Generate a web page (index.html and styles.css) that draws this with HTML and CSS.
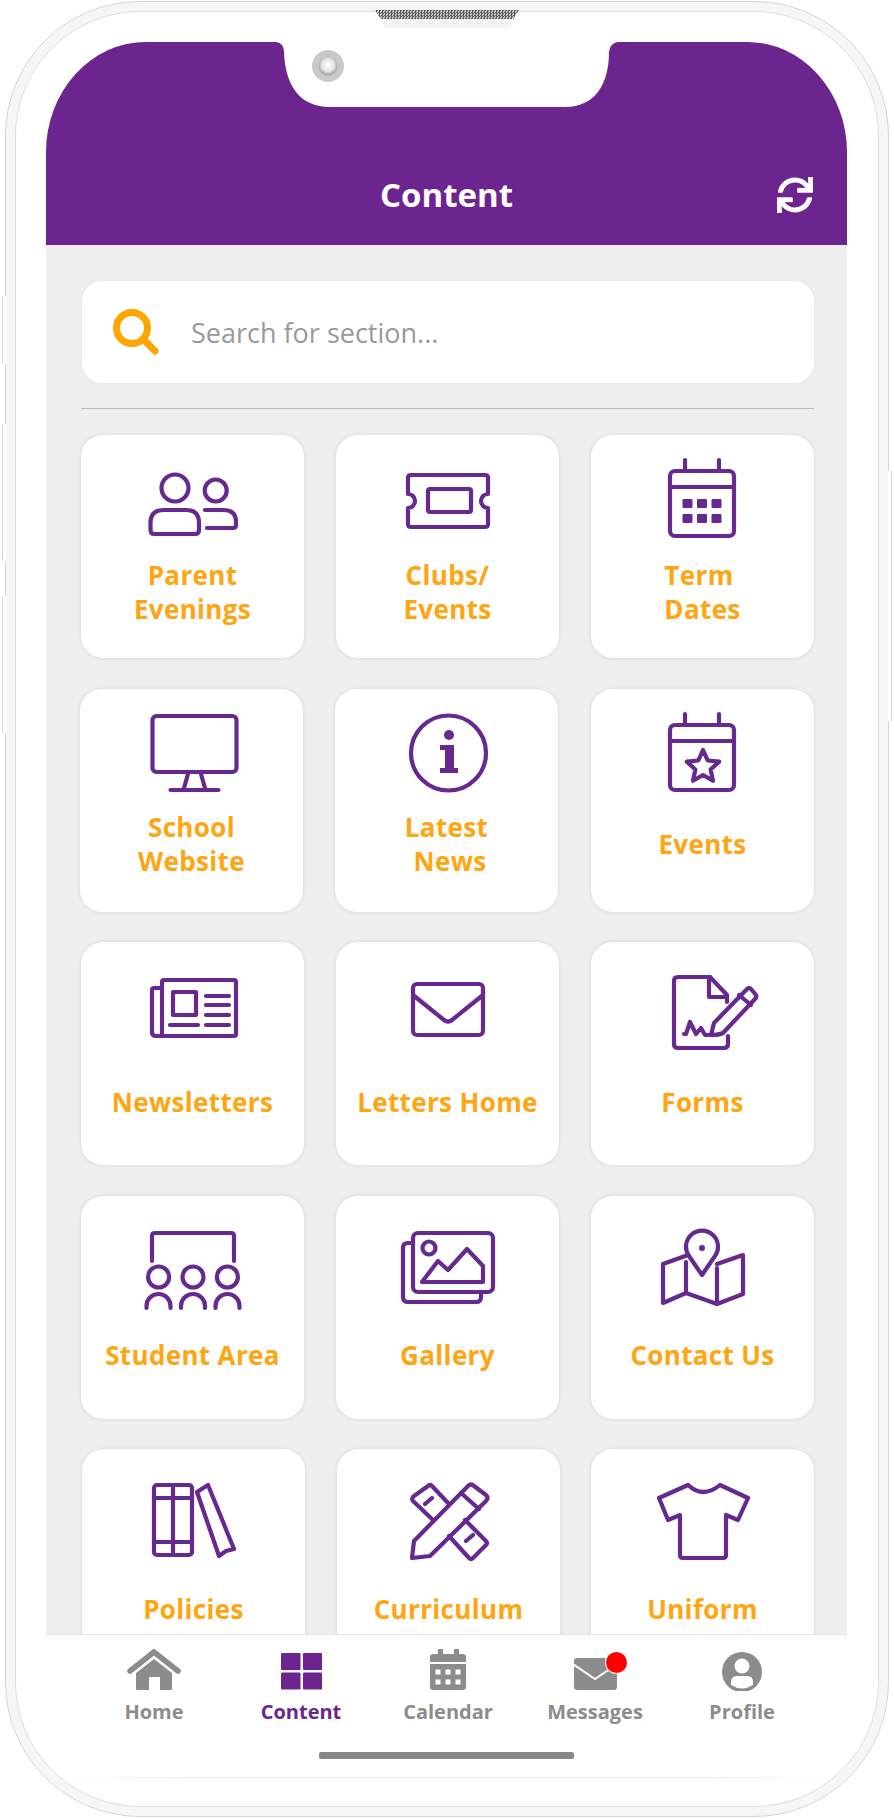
FILE: index.html
```html
<!DOCTYPE html>
<html lang="en">
<head>
    <meta charset="UTF-8">
    <meta name="viewport" content="width=device-width, initial-scale=1.0">
    <title>Content</title>
    <link rel="stylesheet" href="styles.css">
</head>
<body>
    <div class="phone">
        <span class="side-btn btn-mute"></span>
        <span class="side-btn btn-up"></span>
        <span class="side-btn btn-down"></span>
        <span class="side-btn btn-power"></span>
        <div class="speaker"></div>
        <div class="speaker-mesh"></div>
        <div class="bezel">
            <div class="screen">
                <header class="top-bar">
                    <!-- notch + camera -->
                    <svg class="notch" viewBox="0 0 355 66" width="355" height="66">
                        <defs>
                            <radialGradient id="lens" cx="50%" cy="45%" r="55%">
                                <stop offset="0" stop-color="#fff"/>
                                <stop offset="0.6" stop-color="#e4e4e4"/>
                                <stop offset="1" stop-color="#999"/>
                            </radialGradient>
                        </defs>
                        <path fill="#fff" d="M0 0L6 0Q14 1 14 10C15 38 26 65 60 65L295 65C328 65 339 38 339 10Q340 1 348 0L355 0Z"/>
                        <circle cx="58" cy="24" r="16" fill="#c9c9c9"/>
                        <circle cx="58" cy="24" r="9.5" fill="url(#lens)"/>
                    </svg>
                    <span class="top-spacer"></span>
                    <h1 class="top-title">Content</h1>
                    <svg class="refresh" viewBox="0 0 512 512" width="36" height="36">
                        <path fill="#fff" d="M440.65 12.57l4 82.77A247.16 247.16 0 0 0 255.83 8C134.73 8 33.91 94.92 12.29 209.82A12 12 0 0 0 24.09 224h49.05a12 12 0 0 0 11.67-9.26 175.91 175.91 0 0 1 317-56.94l-101.46-4.86a12 12 0 0 0-12.57 12v47.41a12 12 0 0 0 12 12H500a12 12 0 0 0 12-12V12a12 12 0 0 0-12-12h-47.37a12 12 0 0 0-11.98 12.57zM255.83 432a175.61 175.61 0 0 1-146-77.8l101.8 4.87a12 12 0 0 0 12.57-12v-47.4a12 12 0 0 0-12-12H12a12 12 0 0 0-12 12V500a12 12 0 0 0 12 12h47.35a12 12 0 0 0 12-12.6l-4.15-82.57A247.17 247.17 0 0 0 255.83 504c121.11 0 221.93-86.92 243.55-201.82a12 12 0 0 0-11.8-14.18h-49.05a12 12 0 0 0-11.67 9.26A175.86 175.86 0 0 1 255.83 432z"/>
                    </svg>
                </header>

                <main class="list">
                    <div class="search">
                        <svg class="search-icon" viewBox="0 0 48 48" width="48" height="48">
                            <circle cx="20" cy="20" r="15.5" fill="none" stroke="#ffa500" stroke-width="7"/>
                            <path d="M31 31L43 43" stroke="#ffa500" stroke-width="7" stroke-linecap="round"/>
                        </svg>
                        <span class="search-text">Search for section...</span>
                    </div>
                    <div class="divider"></div>

                    <div class="grid">
                        <div class="card row-1">
                            <svg class="icon" viewBox="0 0 100 90">
                                <circle cx="32" cy="31" r="13.5"/>
                                <circle cx="72.7" cy="33.5" r="11"/>
                                <path d="M21 53H43Q56 53 56 66V73Q56 77 52 77H11Q7.5 77 7.5 73V66Q7.5 53 21 53Z"/>
                                <path d="M62 53H80Q93 53 93 65V68Q93 71 90 71H64"/>
                            </svg>
                            <div class="label">Parent<br>Evenings</div>
                        </div>
                        <div class="card row-1">
                            <svg class="icon" viewBox="0 0 100 90">
                                <path d="M13 18H87Q90 18 90 21V37A7 7 0 0 0 90 51V67Q90 70 87 70H13Q10 70 10 67V51A7 7 0 0 0 10 37V21Q10 18 13 18Z"/>
                                <rect x="30" y="32" width="43" height="23" rx="2"/>
                            </svg>
                            <div class="label">Clubs/<br>Events</div>
                        </div>
                        <div class="card row-1">
                            <svg class="icon" viewBox="0 0 100 90">
                                <rect x="17" y="14" width="64" height="65" rx="5"/>
                                <path d="M17 30H81M32 3V14M66 3V14"/>
                                <g class="solid">
                                    <rect x="29.5" y="42" width="10" height="9" rx="1"/>
                                    <rect x="44" y="42" width="10" height="9" rx="1"/>
                                    <rect x="58.5" y="42" width="10" height="9" rx="1"/>
                                    <rect x="29.5" y="57" width="10" height="9" rx="1"/>
                                    <rect x="44" y="57" width="10" height="9" rx="1"/>
                                    <rect x="58.5" y="57" width="10" height="9" rx="1"/>
                                </g>
                            </svg>
                            <div class="label">Term&nbsp;<br>Dates</div>
                        </div>

                        <div class="card row-2 shift-left">
                            <svg class="icon" viewBox="0 0 100 90">
                                <rect x="10.5" y="5" width="84" height="56" rx="4"/>
                                <path d="M46.5 61L41.5 79M58.5 61L63.5 79M28.5 79H76.5"/>
                            </svg>
                            <div class="label">School<br>Website</div>
                        </div>
                        <div class="card row-2 shift-left">
                            <svg class="icon" viewBox="0 0 100 90">
                                <circle cx="51.5" cy="42" r="37.5"/>
                                <circle class="solid" cx="52" cy="24" r="5"/>
                                <path class="solid" d="M43 34H57V57H61V62H43V57H48V39H43Z"/>
                            </svg>
                            <div class="label">Latest<br>&nbsp;News</div>
                        </div>
                        <div class="card row-2">
                            <svg class="icon" viewBox="0 0 100 90">
                                <rect x="17" y="14" width="64" height="65" rx="5"/>
                                <path d="M17 30H81M32 3V14M66 3V14"/>
                                <polygon points="50,39 54.7,49.5 66.2,50.7 57.6,58.5 60,69.8 50,64 40,69.8 42.4,58.5 33.8,50.7 45.3,49.5"/>
                            </svg>
                            <div class="label">Events</div>
                        </div>

                        <div class="card row-3">
                            <svg class="icon" viewBox="0 0 100 90">
                                <rect x="19" y="16" width="74" height="56" rx="2"/>
                                <path d="M19 24H11Q9 24 9 26V68Q9 72 13 72H20"/>
                                <rect x="30" y="28" width="23" height="23"/>
                                <path d="M63 32H86M63 41H86M63 51H86M27 61H55M63 61H86"/>
                            </svg>
                            <div class="label">Newsletters</div>
                        </div>
                        <div class="card row-3">
                            <svg class="icon" viewBox="0 0 100 90">
                                <rect x="15" y="20" width="70" height="51" rx="4"/>
                                <path d="M15 31L46 56Q50 59 54 56L85 31"/>
                            </svg>
                            <div class="label">Letters Home</div>
                        </div>
                        <div class="card row-3">
                            <svg class="icon" viewBox="0 0 100 90">
                                <path d="M57 13H25Q21 13 21 17V80Q21 84 25 84H71Q75 84 75 80V72"/>
                                <path d="M57 13L74 31V38M56 14V33H74"/>
                                <path d="M58 71L61 59L94 25Q96 23 98 25L103 31Q104 33 102 35L70 69Q66 71 58 71Z"/>
                                <path d="M86 31L98 41"/>
                                <path d="M31 70H33L37 58L43 70L48 64L52 71H60"/>
                            </svg>
                            <div class="label">Forms</div>
                        </div>

                        <div class="card row-4">
                            <svg class="icon" viewBox="0 0 100 90">
                                <path d="M9 43V18Q9 15 12 15H88Q91 15 91 18V43"/>
                                <circle cx="15.6" cy="59" r="10.5"/>
                                <circle cx="50" cy="59" r="10.5"/>
                                <circle cx="84.4" cy="59" r="10.5"/>
                                <path d="M3.5 90V88A12 12 0 0 1 27.5 88V90M38 90V88A12 12 0 0 1 62 88V90M72.5 90V88A12 12 0 0 1 96.5 88V90"/>
                            </svg>
                            <div class="label">Student Area</div>
                        </div>
                        <div class="card row-4">
                            <svg class="icon" viewBox="0 0 100 90">
                                <rect x="15" y="15" width="80" height="59" rx="5"/>
                                <path d="M15 25H10Q5 25 5 30V79Q5 84 10 84H78Q83 84 83 79V75"/>
                                <circle cx="31" cy="30" r="6.5"/>
                                <path d="M24 64L40 43L50 52L69 31L85 48V64Z"/>
                            </svg>
                            <div class="label">Gallery</div>
                        </div>
                        <div class="card row-4">
                            <svg class="icon" viewBox="0 0 100 90">
                                <path d="M35 37L10 46V85L33 75L64 86L90 76V37L64 46"/>
                                <path d="M33 44V75M64 50V86"/>
                                <path d="M49 57L36 38A16 16 0 1 1 62 38Z"/>
                                <circle class="solid" cx="49" cy="30" r="3"/>
                            </svg>
                            <div class="label">Contact Us</div>
                        </div>

                        <div class="card row-5 shift-right">
                            <svg class="icon" viewBox="0 0 100 90">
                                <rect x="10" y="14" width="38" height="70" rx="3"/>
                                <path d="M29 14V84M10 27H48M10 71H48"/>
                                <path d="M53 21L64 14L90 78L82 80L75 85Z"/>
                            </svg>
                            <div class="label">Policies</div>
                        </div>
                        <div class="card row-5 shift-right">
                            <svg class="icon" viewBox="0 0 100 90">
                                <path d="M13 87L15 70L69 15Q72 12 75 15L87 24Q90 27 87 30L31 85Z"/>
                                <path d="M62 22L80 38"/>
                                <path d="M50 33L33 15Q31 13 29 15L15 25Q12 27 14 30L34 49M66 49L87 70Q89 72 87 74L74 87Q72 89 70 87L50 65"/>
                                <path d="M26 33L33 27M67 70L74 64"/>
                            </svg>
                            <div class="label">Curriculum</div>
                        </div>
                        <div class="card row-5">
                            <svg class="icon" viewBox="0 0 100 90">
                                <path d="M35 14Q50 28 67 14L95 27L85 49L73 44V84Q73 87 70 87H30Q27 87 27 84V44L15 49L6 27Z"/>
                            </svg>
                            <div class="label">Uniform</div>
                        </div>
                    </div>
                </main>

                <nav class="tabs">
                    <div class="tab">
                        <svg class="tab-icon" viewBox="0 0 54 42" width="54" height="42">
                            <path d="M3 22L27 3L51 22" fill="none" stroke="#8c8c8c" stroke-width="5.5" stroke-linecap="round"/>
                            <path fill="#8c8c8c" d="M27 10L45 24V40Q45 41 44 41H33V28H22V41H10Q9 41 9 40V24Z"/>
                        </svg>
                        <span class="tab-label">Home</span>
                    </div>
                    <div class="tab tab-active">
                        <svg class="tab-icon" viewBox="0 0 41 42" width="41" height="42">
                            <g fill="#6c248f">
                                <rect x="0" y="4" width="19.5" height="17" rx="1"/>
                                <rect x="22" y="4" width="19" height="17" rx="1"/>
                                <rect x="0" y="23.5" width="19.5" height="17" rx="1"/>
                                <rect x="22" y="23.5" width="19" height="17" rx="1"/>
                            </g>
                        </svg>
                        <span class="tab-label">Content</span>
                    </div>
                    <div class="tab">
                        <svg class="tab-icon" viewBox="0 0 36 42" width="36" height="42">
                            <path fill="#8c8c8c" d="M8 0H13V5H24V0H29V5H33Q36 5 36 8V13H0V8Q0 5 3 5H8ZM0 15H36V38Q36 41 33 41H3Q0 41 0 38Z"/>
                            <g fill="#fff">
                                <rect x="5.5" y="20.5" width="5" height="5"/>
                                <rect x="15.5" y="20.5" width="5" height="5"/>
                                <rect x="25.5" y="20.5" width="5" height="5"/>
                                <rect x="5.5" y="30.5" width="5" height="5"/>
                                <rect x="15.5" y="30.5" width="5" height="5"/>
                                <rect x="25.5" y="30.5" width="5" height="5"/>
                            </g>
                        </svg>
                        <span class="tab-label">Calendar</span>
                    </div>
                    <div class="tab">
                        <div class="msg-wrap">
                            <svg class="tab-icon" viewBox="0 0 43 42" width="43" height="42">
                                <rect x="0" y="9" width="43" height="32" rx="3" fill="#8c8c8c"/>
                                <path d="M-1 15L21 30L43 15" fill="none" stroke="#fff" stroke-width="2"/>
                            </svg>
                            <span class="msg-dot"></span>
                        </div>
                        <span class="tab-label">Messages</span>
                    </div>
                    <div class="tab">
                        <svg class="tab-icon" viewBox="0 0 42 42" width="42" height="42">
                            <defs><clipPath id="avatar"><circle cx="21" cy="23" r="20"/></clipPath></defs>
                            <circle cx="21" cy="23" r="20" fill="#8c8c8c"/>
                            <circle cx="21" cy="17" r="7.5" fill="#fff"/>
                            <path fill="#fff" d="M10 36V33Q10 27 16 27H26Q32 27 32 33V36Q21 43 10 36Z" clip-path="url(#avatar)"/>
                        </svg>
                        <span class="tab-label">Profile</span>
                    </div>
                </nav>
                <div class="home-bar"></div>
                <div class="screen-edge"></div>
            </div>
        </div>
    </div>
</body>
</html>
```

FILE: styles.css
```css
* {
    box-sizing: border-box;
}

html, body {
    margin: 0;
    padding: 0;
    height: 1818px;
    overflow: hidden;
    background: #fff;
    font-family: "Open Sans", Lato, sans-serif;
}

/* phone frame */
.phone {
    position: relative;
    width: 884px;
    height: 1816px;
    margin: 1px 0 0 5px;
    padding: 9px;
    border: 1px solid #d6d6d6;
    border-radius: 135px;
    background: #f6f6f6;
}

.bezel {
    height: 100%;
    padding: 30px 30px 0;
    border: 1px solid #dedede;
    border-radius: 125px;
    background: #fff;
}

.side-btn {
    position: absolute;
    width: 4px;
    border-left: 1px solid #d4d4d4;
    border-radius: 3px 0 0 3px;
    background: #fff;
}

.btn-mute { left: -4px; top: 294px; height: 68px; }
.btn-up { left: -4px; top: 422px; height: 137px; }
.btn-down { left: -4px; top: 594px; height: 137px; }
.btn-power {
    right: -4px;
    top: 469px;
    height: 250px;
    border-left: 0;
    border-right: 1px solid #d4d4d4;
    border-radius: 0 3px 3px 0;
}

.speaker {
    position: absolute;
    left: 369px;
    top: 8px;
    width: 144px;
    height: 9px;
    background: repeating-conic-gradient(#5a5a5a 0 25%, #c9c9c9 0 50%) 0 0 / 3px 3px;
    clip-path: polygon(0 0, 100% 0, 96% 100%, 4% 100%);
}

.speaker-mesh {
    position: absolute;
    left: 378px;
    top: 17px;
    width: 126px;
    height: 9px;
    opacity: 0.12;
    background: repeating-conic-gradient(#555 0 25%, #fff 0 50%) 0 0 / 4px 4px;
}

.screen {
    display: flex;
    flex-direction: column;
    width: 801px;
    height: 1736px;
}

/* header */
.top-bar {
    position: relative;
    flex: none;
    display: grid;
    grid-template-columns: 1fr auto 1fr;
    align-items: center;
    height: 203px;
    padding: 128px 34px 25px;
    border-radius: 100px 100px 0 0 / 110px 110px 0 0;
    background: #6c248f;
}

.notch {
    position: absolute;
    left: 224px;
    top: 0;
}

.top-title {
    margin: 0;
    color: #fff;
    font-size: 33px;
    font-weight: 700;
    line-height: 50px;
}

.refresh {
    justify-self: end;
}

/* list */
.list {
    flex: 1;
    min-height: 0;
    overflow: hidden;
    padding: 36px 33px 0 35px;
    background: #efefef;
}

.search {
    display: flex;
    align-items: center;
    gap: 31px;
    height: 102px;
    margin-left: 1px;
    padding: 0 0 0 30px;
    border-radius: 20px;
    background: #fff;
    box-shadow: 0 0 3px rgba(0, 0, 0, 0.06);
}

.search-icon {
    flex: none;
}

.search-text {
    color: #999;
    font-size: 27px;
}

.divider {
    height: 1px;
    margin: 25px 0 26px;
    background: #bdbdbd;
}

.grid {
    display: grid;
    grid-template-columns: repeat(3, 223px);
    grid-auto-rows: 223px;
    column-gap: 32px;
    row-gap: 30.5px;
}

.card {
    display: flex;
    flex-direction: column;
    align-items: center;
    padding-top: 22px;
    border-radius: 22px;
    background: #fff;
    box-shadow: 0 0 5px rgba(0, 0, 0, 0.1);
}

/* the rows in the shot are not quite in line */
.shift-left {
    margin: 0 1px 0 -1px;
}

.shift-right {
    margin: 0 -1px 0 1px;
}

.icon {
    flex: none;
    width: 100px;
    height: 90px;
    overflow: visible;
    fill: none;
    stroke: #65298f;
    stroke-width: 4.2;
    stroke-linejoin: round;
    stroke-linecap: round;
}

.icon .solid {
    fill: #65298f;
    stroke: none;
}

.label {
    display: flex;
    align-items: center;
    justify-content: center;
    height: 92px;
    color: #ffa511;
    font-size: 26px;
    font-weight: 700;
    letter-spacing: 0.35px;
    line-height: 34px;
    text-align: center;
}

.row-1 .label { margin-top: -1px; }
.row-2 .label { margin-top: -3px; }
.row-3 .label { margin-top: 2px; }
.row-4 .label { margin-top: 1px; }
.row-5 .label { margin-top: 2px; }

/* bottom tabs */
.tabs {
    flex: none;
    display: flex;
    padding: 14px 0 0 34.5px;
    border-top: 1px solid #e4e4e4;
    background: #fff;
}

.tab {
    display: flex;
    flex-direction: column;
    align-items: center;
    width: 147px;
}

.tab-icon {
    display: block;
}

.tab-label {
    margin-top: 7px;
    color: #8c8c8c;
    font-size: 20px;
    font-weight: 700;
    line-height: 28px;
}

.tab-active .tab-label {
    color: #6c248f;
}

.msg-wrap {
    position: relative;
}

.msg-dot {
    position: absolute;
    right: -10px;
    top: 3px;
    width: 21px;
    height: 21px;
    border-radius: 50%;
    background: #f00;
    box-shadow: 0 0 0 1px #fff;
}

.home-bar {
    flex: none;
    width: 255px;
    height: 7px;
    margin: 26px auto 0;
    border-radius: 2px;
    background: #888;
}

.screen-edge {
    flex: none;
    height: 1px;
    margin-top: 18px;
    background: linear-gradient(to right, transparent, #e8e8e8 20%, #e8e8e8 80%, transparent);
}
```
